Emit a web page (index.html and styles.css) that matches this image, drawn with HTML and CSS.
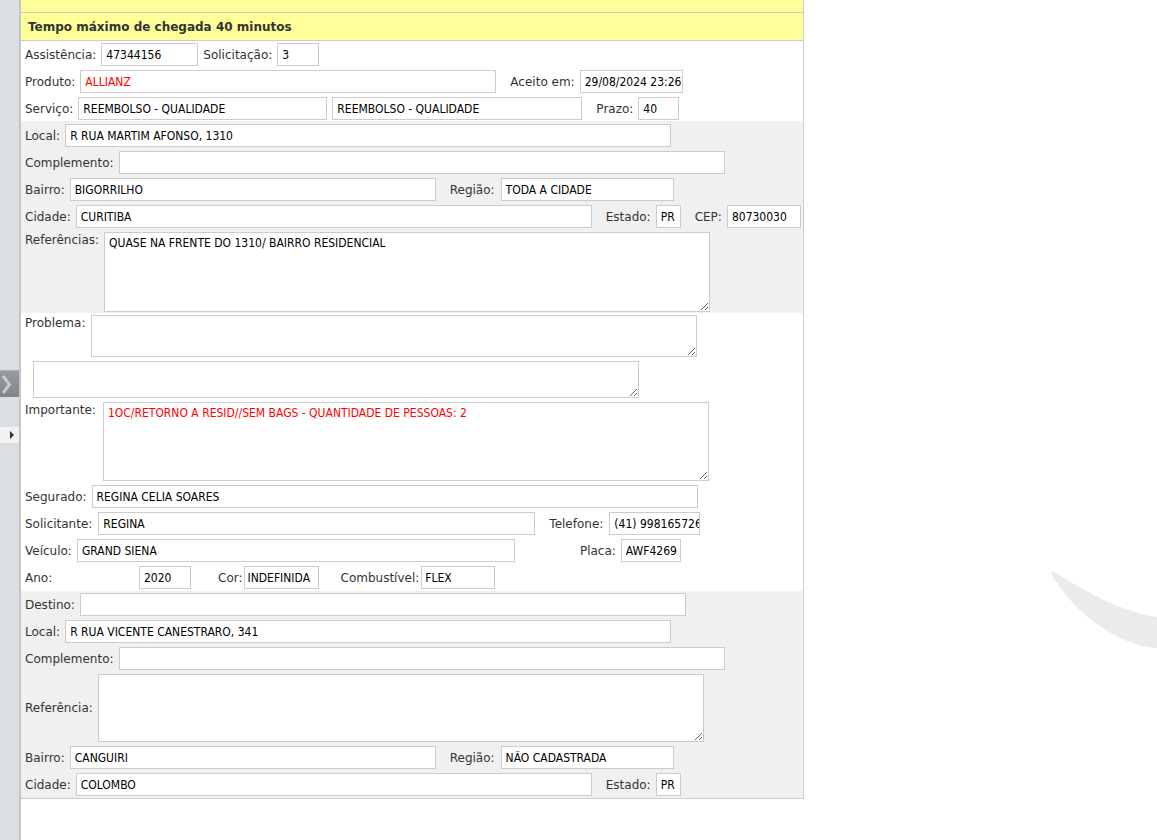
FILE: index.html
```html
<!DOCTYPE html>
<html lang="pt-BR">
<head>
<meta charset="utf-8">
<title>Atendimento</title>
<link rel="stylesheet" href="styles.css">
</head>
<body>
<div class="layout">
  <aside class="sidebar">
    <div class="toggle">
      <svg width="20" height="27" viewBox="0 0 20 27"><polyline points="3,5 9.5,13.5 3,22" fill="none" stroke="#c8ccd0" stroke-width="3"/></svg>
    </div>
    <div class="expander"><span class="tri"></span></div>
  </aside>

  <main class="panel">
    <div class="band"></div>
    <div class="title">Tempo máximo de chegada 40 minutos</div>

    <section class="sec sec-a">
      <div class="row">
        <label class="lbl">Assistência:</label><input class="fld w97" type="text" value="47344156" readonly>
        <label class="lbl">Solicitação:</label><input class="fld w42" type="text" value="3" readonly>
      </div>
      <div class="row">
        <label class="lbl">Produto:</label><input class="fld w416 red" type="text" value="ALLIANZ" readonly>
        <label class="lbl sp9">Aceito em:</label><input class="fld w103" type="text" value="29/08/2024 23:26" readonly>
      </div>
      <div class="row">
        <label class="lbl">Serviço:</label><input class="fld w249" type="text" value="REEMBOLSO - QUALIDADE" readonly>
        <input class="fld w250 sp1" type="text" value="REEMBOLSO - QUALIDADE" readonly>
        <label class="lbl sp9">Prazo:</label><input class="fld w41" type="text" value="40" readonly>
      </div>
    </section>

    <section class="sec sec-b grey">
      <div class="row">
        <label class="lbl">Local:</label><input class="fld w606" type="text" value="R RUA MARTIM AFONSO, 1310" readonly>
      </div>
      <div class="row">
        <label class="lbl">Complemento:</label><input class="fld w606" type="text" value="" readonly>
      </div>
      <div class="row">
        <label class="lbl">Bairro:</label><input class="fld w366" type="text" value="BIGORRILHO" readonly>
        <label class="lbl sp9 after1">Região:</label><input class="fld w173" type="text" value="TODA A CIDADE" readonly>
      </div>
      <div class="row">
        <label class="lbl">Cidade:</label><input class="fld w516" type="text" value="CURITIBA" readonly>
        <label class="lbl sp9">Estado:</label><input class="fld w25" type="text" value="PR" readonly>
        <label class="lbl sp9">CEP:</label><input class="fld w74" type="text" value="80730030" readonly>
      </div>
      <div class="row row-top">
        <label class="lbl lbl-top">Referências:</label><textarea class="area w606 h80" readonly>QUASE NA FRENTE DO 1310/ BAIRRO RESIDENCIAL</textarea>
      </div>
    </section>

    <section class="sec sec-c">
      <div class="row row-top">
        <label class="lbl lbl-top after1">Problema:</label><textarea class="area w606 h42" readonly></textarea>
      </div>
      <div class="row row-top">
        <textarea class="area w606 h37 indent" readonly></textarea>
      </div>
      <div class="row row-top">
        <label class="lbl lbl-top after2">Importante:</label><textarea class="area w606 h79 red" readonly>1OC/RETORNO A RESID//SEM BAGS - QUANTIDADE DE PESSOAS: 2</textarea>
      </div>
      <div class="row">
        <label class="lbl">Segurado:</label><input class="fld w606" type="text" value="REGINA CELIA SOARES" readonly>
      </div>
      <div class="row">
        <label class="lbl after1">Solicitante:</label><input class="fld w437" type="text" value="REGINA" readonly>
        <label class="lbl sp9 after1">Telefone:</label><input class="fld w91" type="text" value="(41) 998165726" readonly>
      </div>
      <div class="row">
        <label class="lbl">Veículo:</label><input class="fld w438" type="text" value="GRAND SIENA" readonly>
        <label class="lbl sp60">Placa:</label><input class="fld w60" type="text" value="AWF4269" readonly>
      </div>
      <div class="row">
        <label class="lbl lbl-ano">Ano:</label><input class="fld w52" type="text" value="2020" readonly>
        <label class="lbl sp22 pull4">Cor:</label><input class="fld w75 tight" type="text" value="INDEFINIDA" readonly>
        <label class="lbl sp17 pull3">Combustível:</label><input class="fld w74 tight" type="text" value="FLEX" readonly>
      </div>
    </section>

    <section class="sec sec-d grey">
      <div class="row">
        <label class="lbl">Destino:</label><input class="fld w606" type="text" value="" readonly>
      </div>
      <div class="row">
        <label class="lbl">Local:</label><input class="fld w606" type="text" value="R RUA VICENTE CANESTRARO, 341" readonly>
      </div>
      <div class="row">
        <label class="lbl">Complemento:</label><input class="fld w606" type="text" value="" readonly>
      </div>
      <div class="row row-mid">
        <label class="lbl">Referência:</label><textarea class="area w606 h68" readonly></textarea>
      </div>
      <div class="row">
        <label class="lbl">Bairro:</label><input class="fld w366" type="text" value="CANGUIRI" readonly>
        <label class="lbl sp9 after1">Região:</label><input class="fld w173" type="text" value="NÃO CADASTRADA" readonly>
      </div>
      <div class="row">
        <label class="lbl">Cidade:</label><input class="fld w516" type="text" value="COLOMBO" readonly>
        <label class="lbl sp9">Estado:</label><input class="fld w25" type="text" value="PR" readonly>
      </div>
    </section>
  </main>
</div>

<svg class="swoosh" width="117" height="100" viewBox="0 0 117 100" aria-hidden="true">
  <path d="M14,12 C40,28 80,52 117,57 L117,88 C80,86 35,55 12,15 Q10,10 14,12 Z" fill="#ebebeb"/>
</svg>
</body>
</html>
```

FILE: styles.css
```css
* { box-sizing: border-box; }

html, body {
  margin: 0;
  padding: 0;
  background: #ffffff;
}

body {
  font-family: "DejaVu Sans", Verdana, sans-serif;
  font-size: 12px;
  color: #333333;
  position: relative;
  min-height: 840px;
  overflow: hidden;
}

.layout {
  display: flex;
  align-items: flex-start;
}

/* ---------- left sidebar ---------- */
.sidebar {
  width: 21px;
  min-height: 840px;
  background: #dcdfe2;
  border-right: 2px solid #c2c6ca;
  display: flex;
  flex-direction: column;
}

.toggle {
  margin-top: 370px;
  width: 19px;
  height: 27px;
  background: linear-gradient(#959ca2, #7e858b);
  border-top: 1px solid #a9afb4;
  overflow: hidden;
}

.toggle svg { display: block; }

.expander {
  margin-top: 30px;
  width: 19px;
  height: 16px;
  background: #f1f1f1;
  display: flex;
  align-items: center;
  padding-left: 10px;
}

.tri {
  width: 0;
  height: 0;
  border-left: 4px solid #333333;
  border-top: 4px solid transparent;
  border-bottom: 4px solid transparent;
}

/* ---------- main panel ---------- */
.panel {
  width: 783px;
  border-right: 1px solid #cccccc;
  border-bottom: 1px solid #cccccc;
}

.band {
  height: 13px;
  background: #ffff99;
  border-bottom: 1px solid #cccccc;
}

.title {
  height: 28px;
  padding-top: 2px;
  line-height: 25px;
  background: #ffff99;
  border-bottom: 1px solid #cccccc;
  padding-left: 7px;
  font-weight: bold;
  font-size: 12px;
  color: #333333;
  overflow: hidden;
}

.sec {
  display: flex;
  flex-direction: column;
  gap: 4px;
  padding-left: 4px;
}

.grey { background: #f0f0f0; }

.sec-a { padding-top: 2px; padding-bottom: 1px; }
.sec-b { padding-top: 3px; padding-bottom: 1px; }
.sec-c { padding-top: 2px; padding-bottom: 2px; }
.sec-d { padding-top: 2px; padding-bottom: 2px; }

.row {
  display: flex;
  align-items: center;
  gap: 5px;
  height: 23px;
}

.row-top {
  align-items: flex-start;
  height: auto;
}

.row-mid {
  align-items: center;
  height: auto;
}

.lbl {
  white-space: nowrap;
  color: #333333;
  font-size: 12px;
}

.lbl-top {
  line-height: 16px;
}

.lbl-ano { width: 109px; }

.sp1 { margin-left: 1px; }
.sp9 { margin-left: 9px; }
.sp17 { margin-left: 17px; }
.sp22 { margin-left: 22px; }
.sp60 { margin-left: 60px; }

.after1 { margin-right: 1px; }
.after2 { margin-right: 2px; }
.pull3 { margin-right: -3px; }
.pull4 { margin-right: -4px; }

/* ---------- fields ---------- */
.fld,
.area {
  font-family: "DejaVu Sans Condensed", "DejaVu Sans", sans-serif;
  font-stretch: condensed;
  font-size: 12px;
  color: #000000;
  background: #ffffff;
  border: 1px solid #cccccc;
  border-radius: 0;
  margin: 0;
  outline: none;
}

.fld {
  height: 23px;
  padding: 0 0 0 4px;
}

.fld.tight { padding-left: 3px; }

.area {
  padding: 3px 4px;
  resize: both;
  line-height: 14px;
}

.red { color: #ff0000; }

.indent { margin-left: 8px; }

.w25 { width: 25px; }
.w41 { width: 41px; }
.w42 { width: 42px; }
.w52 { width: 52px; }
.w60 { width: 60px; }
.w74 { width: 74px; }
.w75 { width: 75px; }
.w91 { width: 91px; }
.w97 { width: 97px; }
.w103 { width: 103px; }
.w173 { width: 173px; }
.w249 { width: 249px; }
.w250 { width: 250px; }
.w366 { width: 366px; }
.w416 { width: 416px; }
.w437 { width: 437px; }
.w438 { width: 438px; }
.w516 { width: 516px; }
.w606 { width: 606px; }

.h37 { height: 37px; }
.h42 { height: 42px; }
.h68 { height: 68px; }
.h79 { height: 79px; }
.h80 { height: 80px; }

/* decorative watermark on the right */
.swoosh {
  position: absolute;
  left: 1040px;
  top: 560px;
}
```
